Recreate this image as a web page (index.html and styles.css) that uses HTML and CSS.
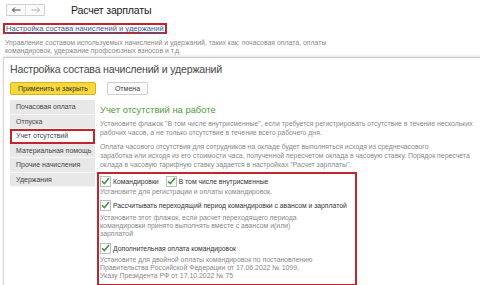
FILE: index.html
```html
<!DOCTYPE html>
<html lang="ru">
<head>
<meta charset="utf-8">
<link rel="stylesheet" href="styles.css">
</head>
<body>
<div class="page">
  <div class="top">
    <div class="nav">
      <span class="navbtn">
        <svg width="9" height="6" viewBox="0 0 9 6"><path d="M0.5 3H8.5M3 0.5L0.5 3L3 5.5" fill="none" stroke="#444" stroke-width="1"/></svg>
      </span>
      <span class="navbtn">
        <svg width="9" height="6" viewBox="0 0 9 6"><path d="M0.5 3H8.5M6 0.5L8.5 3L6 5.5" fill="none" stroke="#b0b0b0" stroke-width="1"/></svg>
      </span>
    </div>
    <div class="title">Расчет зарплаты</div>
  </div>
  <div class="linkrow"><span class="hl-link"><a class="link">Настройка состава начислений и удержаний</a></span></div>
  <div class="desc">Управление составом используемых начислений и удержаний, таких как: почасовая оплата, оплаты<br>командировок, удержание профсоюзных взносов и т.д.</div>
  <div class="dialog">
    <div class="dtitle">Настройка состава начислений и удержаний</div>
    <div class="actions">
      <span class="btn primary">Применить и закрыть</span>
      <span class="btn">Отмена</span>
    </div>
    <div class="body">
      <div class="tabs">
        <div class="tab">Почасовая оплата</div>
        <div class="tab">Отпуска</div>
        <div class="tab sel">Учет отсутствий</div>
        <div class="tab">Материальная помощь</div>
        <div class="tab">Прочие начисления</div>
        <div class="tab">Удержания</div>
      </div>
      <div class="content">
        <div class="heading">Учет отсутствий на работе</div>
        <div class="note first">Установите флажок "В том числе внутрисменные", если требуется регистрировать отсутствие в течение нескольких<br>рабочих часов, а не только отсутствие в течение всего рабочего дня.</div>
        <div class="note second">Оплата часового отсутствия для сотрудников на окладе будет выполняться исходя из среднечасового<br>заработка или исходя из его стоимости часа, полученной пересчетом оклада в часовую ставку. Порядок пересчета<br>оклада в часовую тарифную ставку задается в настройках "Расчет зарплаты".</div>
        <div class="redbox">
          <div class="chkrow r1">
            <span class="chk"><span class="box"><svg width="9" height="8" viewBox="0 0 9 8"><path d="M1 4.2L3.4 6.6L8 1" fill="none" stroke="#3d9a3d" stroke-width="1.6"/></svg></span>Командировки</span>
            <span class="chk"><span class="box"><svg width="9" height="8" viewBox="0 0 9 8"><path d="M1 4.2L3.4 6.6L8 1" fill="none" stroke="#3d9a3d" stroke-width="1.6"/></svg></span>В том числе внутрисменные</span>
          </div>
          <div class="note in n1">Установите для регистрации и оплаты командировок.</div>
          <div class="chkrow r2">
            <span class="chk"><span class="box"><svg width="9" height="8" viewBox="0 0 9 8"><path d="M1 4.2L3.4 6.6L8 1" fill="none" stroke="#3d9a3d" stroke-width="1.6"/></svg></span>Рассчитывать переходящий период командировки с авансом и зарплатой</span>
          </div>
          <div class="note in n2">Установите этот флажок, если расчет переходящего периода<br>командировки принято выполнять вместе с авансом и(или)<br>зарплатой</div>
          <div class="chkrow r3">
            <span class="chk"><span class="box"><svg width="9" height="8" viewBox="0 0 9 8"><path d="M1 4.2L3.4 6.6L8 1" fill="none" stroke="#3d9a3d" stroke-width="1.6"/></svg></span>Дополнительная оплата командировок</span>
          </div>
          <div class="note in n3">Установите для двойной оплаты командировок по постановлению<br>Правительства Российской Федерации от 17.06.2022 № 1099,<br>Указу Президента РФ от 17.10.2022 № 75</div>
        </div>
      </div>
    </div>
  </div>
</div>
</body>
</html>
```
FILE: styles.css
```css
html, body {
  margin: 0;
  padding: 0;
  background: #fff;
  width: 480px;
  height: 285px;
  overflow: hidden;
}
.page {
  font-family: "Liberation Sans", Arial, sans-serif;
  color: #333;
}
.top {
  display: flex;
  align-items: center;
  padding: 4px 0 0 6px;
  height: 12px;
}
.nav {
  display: flex;
  border: 1px solid #cfcfcf;
  border-radius: 1px;
}
.navbtn {
  width: 18px;
  height: 10px;
  display: flex;
  align-items: center;
  justify-content: center;
  background: #fafafa;
}
.navbtn + .navbtn {
  border-left: 1px solid #e0e0e0;
}
.title {
  margin-left: 26px;
  font-size: 10.6px;
  letter-spacing: -0.2px;
  color: #1a1a1a;
  line-height: 12px;
}
.linkrow {
  margin: 7px 0 0 3px;
  height: 11px;
  display: flex;
}
.hl-link {
  display: flex;
  align-items: center;
  border: 2px solid #c4252d;
  padding: 0 1px;
  height: 7px;
  font-size: 7.6px;
}
.link {
  display: block;
  font-size: 7.6px;
  line-height: 8px;
  color: #3c5a96;
  text-decoration: underline;
}
.desc {
  margin: 5px 0 0 5px;
  font-size: 6.9px;
  line-height: 8px;
  color: #888;
}
.dialog {
  margin: 2px 0 0 3px;
  border-top: 1px solid #c8c8c8;
  border-left: 1px solid #d6d6d6;
  box-shadow: 0 -1px 3px rgba(0,0,0,0.12);
  height: 240px;
  padding-left: 6px;
}
.dtitle {
  font-size: 10.6px;
  letter-spacing: -0.2px;
  color: #484848;
  margin-top: 5px;
  line-height: 13px;
}
.actions {
  display: flex;
  gap: 11px;
  margin-top: 6px;
}
.btn {
  display: inline-flex;
  align-items: center;
  height: 11px;
  padding: 0 7px;
  border: 1px solid #cfcfcf;
  border-radius: 2px;
  font-size: 7px;
  color: #444;
  background: #fbfbfb;
}
.btn.primary {
  background: #f6d83c;
  border-color: #d6b41a;
  color: #333;
}
.body {
  display: flex;
  margin-top: 5px;
}
.tabs {
  width: 85px;
  flex: none;
  align-self: flex-start;
  background: #e8e8e8;
}
.tab {
  font-size: 7px;
  color: #444;
  height: 13.5px;
  line-height: 13.5px;
  padding-left: 6px;
  border-bottom: 1px solid #f6f6f6;
  white-space: nowrap;
  overflow: hidden;
}
.tab.sel {
  background: #fff;
  border: 2px solid #c4252d;
  height: 10.5px;
  line-height: 10.5px;
  padding-left: 4px;
}
.content {
  margin-left: 5px;
  flex: 1;
  min-width: 0;
}
.heading {
  font-size: 9.4px;
  color: #529a3c;
  margin-top: 4px;
  line-height: 12px;
}
.note {
  margin: 0;
  font-size: 6.9px;
  line-height: 9px;
  color: #888;
  white-space: nowrap;
}
.note.first {
  margin-top: 3px;
}
.note.second {
  margin-top: 5px;
}
.redbox {
  margin: 3px 0 0 -3px;
  width: 260px;
  height: 114px;
  border: 2px solid #c4252d;
  padding: 0 0 0 1px;
  box-sizing: border-box;
}
.chkrow {
  display: flex;
  gap: 7px;
  height: 12px;
  align-items: center;
}
.chkrow.r1 { margin-top: 1px; }
.chkrow.r2 { margin-top: 3px; }
.chkrow.r3 { margin-top: 4px; }
.chk {
  display: inline-flex;
  align-items: center;
  font-size: 6.8px;
  color: #333;
  white-space: nowrap;
}
.box {
  width: 9px;
  height: 9px;
  border: 1px solid #bdbdbd;
  margin-right: 2px;
  display: inline-flex;
  align-items: center;
  justify-content: center;
  background: #fff;
}
.note.in {
  line-height: 8px;
}
.note.n1 { margin-top: 1px; }
.note.n2 { margin-top: 3px; }
.note.n3 { margin-top: 2px; }
```
